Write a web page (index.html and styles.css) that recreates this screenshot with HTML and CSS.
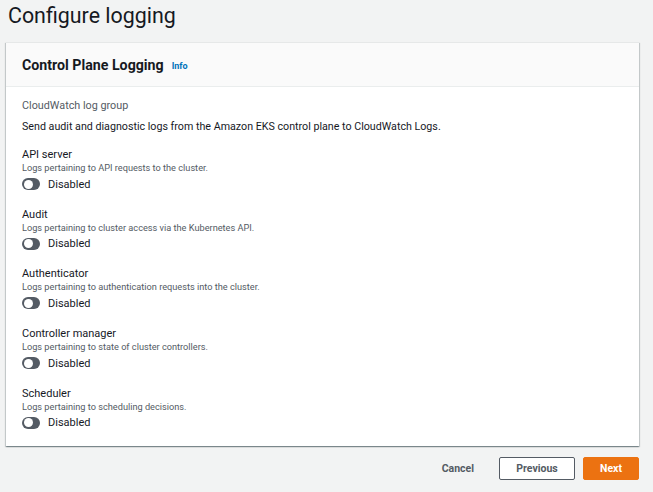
FILE: index.html
```html
<!DOCTYPE html>
<html>
<head>
<meta charset="utf-8">
<link rel="stylesheet" href="styles.css">
</head>
<body>
<h1 class="title">Configure logging</h1>
<div class="card">
  <div class="card-header">
    <h2 class="card-title">Control Plane Logging</h2>
    <a class="info">Info</a>
  </div>
  <div class="card-body">
    <div class="group-label">CloudWatch log group</div>
    <div class="group-desc">Send audit and diagnostic logs from the Amazon EKS control plane to CloudWatch Logs.</div>
    <div class="items">
      <div class="item">
        <div class="item-label">API server</div>
        <div class="item-desc">Logs pertaining to API requests to the cluster.</div>
        <div class="toggle-row"><span class="toggle"><span class="knob"></span></span><span class="toggle-text">Disabled</span></div>
      </div>
      <div class="item">
        <div class="item-label">Audit</div>
        <div class="item-desc">Logs pertaining to cluster access via the Kubernetes API.</div>
        <div class="toggle-row"><span class="toggle"><span class="knob"></span></span><span class="toggle-text">Disabled</span></div>
      </div>
      <div class="item">
        <div class="item-label">Authenticator</div>
        <div class="item-desc">Logs pertaining to authentication requests into the cluster.</div>
        <div class="toggle-row"><span class="toggle"><span class="knob"></span></span><span class="toggle-text">Disabled</span></div>
      </div>
      <div class="item">
        <div class="item-label">Controller manager</div>
        <div class="item-desc">Logs pertaining to state of cluster controllers.</div>
        <div class="toggle-row"><span class="toggle"><span class="knob"></span></span><span class="toggle-text">Disabled</span></div>
      </div>
      <div class="item">
        <div class="item-label">Scheduler</div>
        <div class="item-desc">Logs pertaining to scheduling decisions.</div>
        <div class="toggle-row"><span class="toggle"><span class="knob"></span></span><span class="toggle-text">Disabled</span></div>
      </div>
    </div>
  </div>
</div>
<div class="actions">
  <button class="btn btn-link">Cancel</button>
  <button class="btn btn-normal">Previous</button>
  <button class="btn btn-primary">Next</button>
</div>
</body>
</html>
```
FILE: styles.css
```css
html, body {
  margin: 0;
  padding: 0;
  background: #f2f3f3;
  font-family: Roboto, "Liberation Sans", sans-serif;
  color: #16191f;
}
body {
  padding: 0 14px 0 6px;
  width: 633px;
}
.title {
  margin: 0;
  padding: 1px 0 0 2px;
  font-size: 21.4px;
  font-weight: 400;
  line-height: 30px;
  height: 41px;
  color: #16191f;
}
.card {
  background: #fff;
  border-top: 1px solid #e6e8e8;
  box-shadow: 0 1px 1px 0 rgba(0,28,36,0.3), 1px 1px 1px 0 rgba(0,28,36,0.15), -1px 1px 1px 0 rgba(0,28,36,0.15);
  height: 403px;
}
.card-header {
  background: #fafafa;
  border-bottom: 1px solid #eaeded;
  height: 43px;
  display: flex;
  align-items: center;
  padding: 0 16px;
  gap: 8px;
}
.card-title {
  margin: 0;
  font-size: 14.2px;
  font-weight: 700;
  color: #16191f;
}
.info {
  font-size: 9px;
  font-weight: 700;
  color: #0073bb;
  padding-top: 3px;
}
.card-body {
  padding: 11px 16px 0;
}
.group-label {
  font-size: 10.8px;
  color: #545b64;
  line-height: 16px;
}
.group-desc {
  font-size: 10.7px;
  line-height: 16px;
  margin-top: 5px;
}
.items {
  margin-top: 13px;
  display: flex;
  flex-direction: column;
  gap: 15.7px;
}
.item-label {
  font-size: 11px;
  line-height: 14px;
}
.item-desc {
  font-size: 9.2px;
  line-height: 12px;
  color: #545b64;
  margin-top: 0;
}
.toggle-row {
  display: flex;
  align-items: center;
  gap: 8px;
  margin-top: 2px;
  height: 16px;
}
.toggle {
  width: 18px;
  height: 12px;
  border-radius: 6px;
  background: #545b64;
  position: relative;
  display: inline-block;
}
.knob {
  position: absolute;
  left: 1.5px;
  top: 1.5px;
  width: 9px;
  height: 9px;
  border-radius: 50%;
  background: #fff;
}
.toggle-text {
  font-size: 11px;
  color: #16191f;
}
.actions {
  display: flex;
  justify-content: flex-end;
  align-items: center;
  gap: 8px;
  margin-top: 11px;
}
.btn {
  font-family: inherit;
  font-size: 10.5px;
  font-weight: 700;
  height: 23px;
  border-radius: 2px;
  padding: 0 16px;
  cursor: pointer;
}
.btn-link {
  background: transparent;
  border: 1px solid transparent;
  color: #545b64;
  margin-right: 0;
}
.btn-normal {
  background: #fff;
  border: 1px solid #545b64;
  color: #545b64;
  width: 76px;
}
.btn-primary {
  background: #ec7211;
  border: 1px solid #ec7211;
  color: #fff;
  width: 56px;
}
```
